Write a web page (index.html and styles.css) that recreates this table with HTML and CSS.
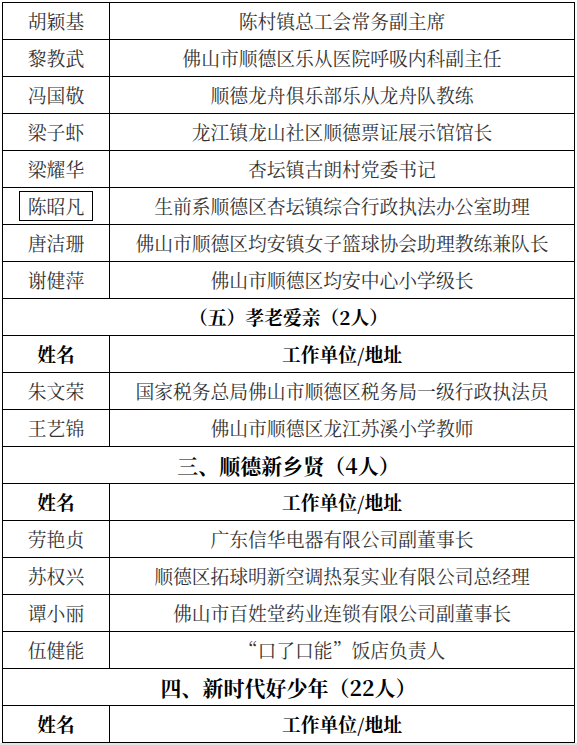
FILE: index.html
```html
<!DOCTYPE html>
<html lang="zh-CN">
<head>
<meta charset="utf-8">
<title>名单</title>
<link rel="stylesheet" href="styles.css">
</head>
<body>
<table class="roster">
  <colgroup><col class="c-name"><col class="c-unit"></colgroup>
  <tbody>
    <tr><td>胡颖基</td><td>陈村镇总工会常务副主席</td></tr>
    <tr><td>黎教武</td><td>佛山市顺德区乐从医院呼吸内科副主任</td></tr>
    <tr><td>冯国敬</td><td>顺德龙舟俱乐部乐从龙舟队教练</td></tr>
    <tr><td>梁子虾</td><td>龙江镇龙山社区顺德票证展示馆馆长</td></tr>
    <tr><td>梁耀华</td><td>杏坛镇古朗村党委书记</td></tr>
    <tr><td><span class="boxed">陈昭凡</span></td><td>生前系顺德区杏坛镇综合行政执法办公室助理</td></tr>
    <tr><td>唐洁珊</td><td>佛山市顺德区均安镇女子篮球协会助理教练兼队长</td></tr>
    <tr><td>谢健萍</td><td>佛山市顺德区均安中心小学级长</td></tr>
    <tr class="sub"><td colspan="2">（五）孝老爱亲（2人）</td></tr>
    <tr class="head"><td>姓名</td><td>工作单位/地址</td></tr>
    <tr><td>朱文荣</td><td>国家税务总局佛山市顺德区税务局一级行政执法员</td></tr>
    <tr><td>王艺锦</td><td>佛山市顺德区龙江苏溪小学教师</td></tr>
    <tr class="sec"><td colspan="2">三、顺德新乡贤（4人）</td></tr>
    <tr class="head"><td>姓名</td><td>工作单位/地址</td></tr>
    <tr><td>劳艳贞</td><td>广东信华电器有限公司副董事长</td></tr>
    <tr><td>苏权兴</td><td>顺德区拓球明新空调热泵实业有限公司总经理</td></tr>
    <tr><td>谭小丽</td><td>佛山市百姓堂药业连锁有限公司副董事长</td></tr>
    <tr><td>伍健能</td><td>“口了口能”饭店负责人</td></tr>
    <tr class="sec"><td colspan="2">四、新时代好少年（22人）</td></tr>
    <tr class="head"><td>姓名</td><td>工作单位/地址</td></tr>
  </tbody>
</table>
</body>
</html>
```

FILE: styles.css
```css
html, body {
  margin: 0;
  padding: 0;
  background: #ffffff;
}
body {
  padding: 2px 0 0 2px;
  height: 745px;
  box-sizing: border-box;
  overflow: hidden;
  font-family: "Noto Serif CJK SC", "Noto Sans CJK SC", "Liberation Serif", serif;
  color: #333333;
  border-bottom: 2px solid #e4e4e4;
}
.roster {
  border-collapse: collapse;
  table-layout: fixed;
  width: 572px;
}
.c-name { width: 107px; }
.c-unit { width: 465px; }
.roster td {
  border: 1px solid #000;
  height: 36px;
  padding: 0;
  text-align: center;
  vertical-align: middle;
  font-size: 18.8px;
  line-height: 20px;
  white-space: nowrap;
  box-sizing: border-box;
}
.roster tr {
  height: 37px;
}
.boxed {
  display: inline-block;
  border: 1px solid #000;
  padding: 4px 8px;
  line-height: 20px;
}
.sub td {
  font-weight: bold;
  color: #000;
}
.head td {
  font-weight: bold;
  color: #000;
}
.sec td {
  font-weight: bold;
  font-size: 21px;
  color: #000;
}
```
